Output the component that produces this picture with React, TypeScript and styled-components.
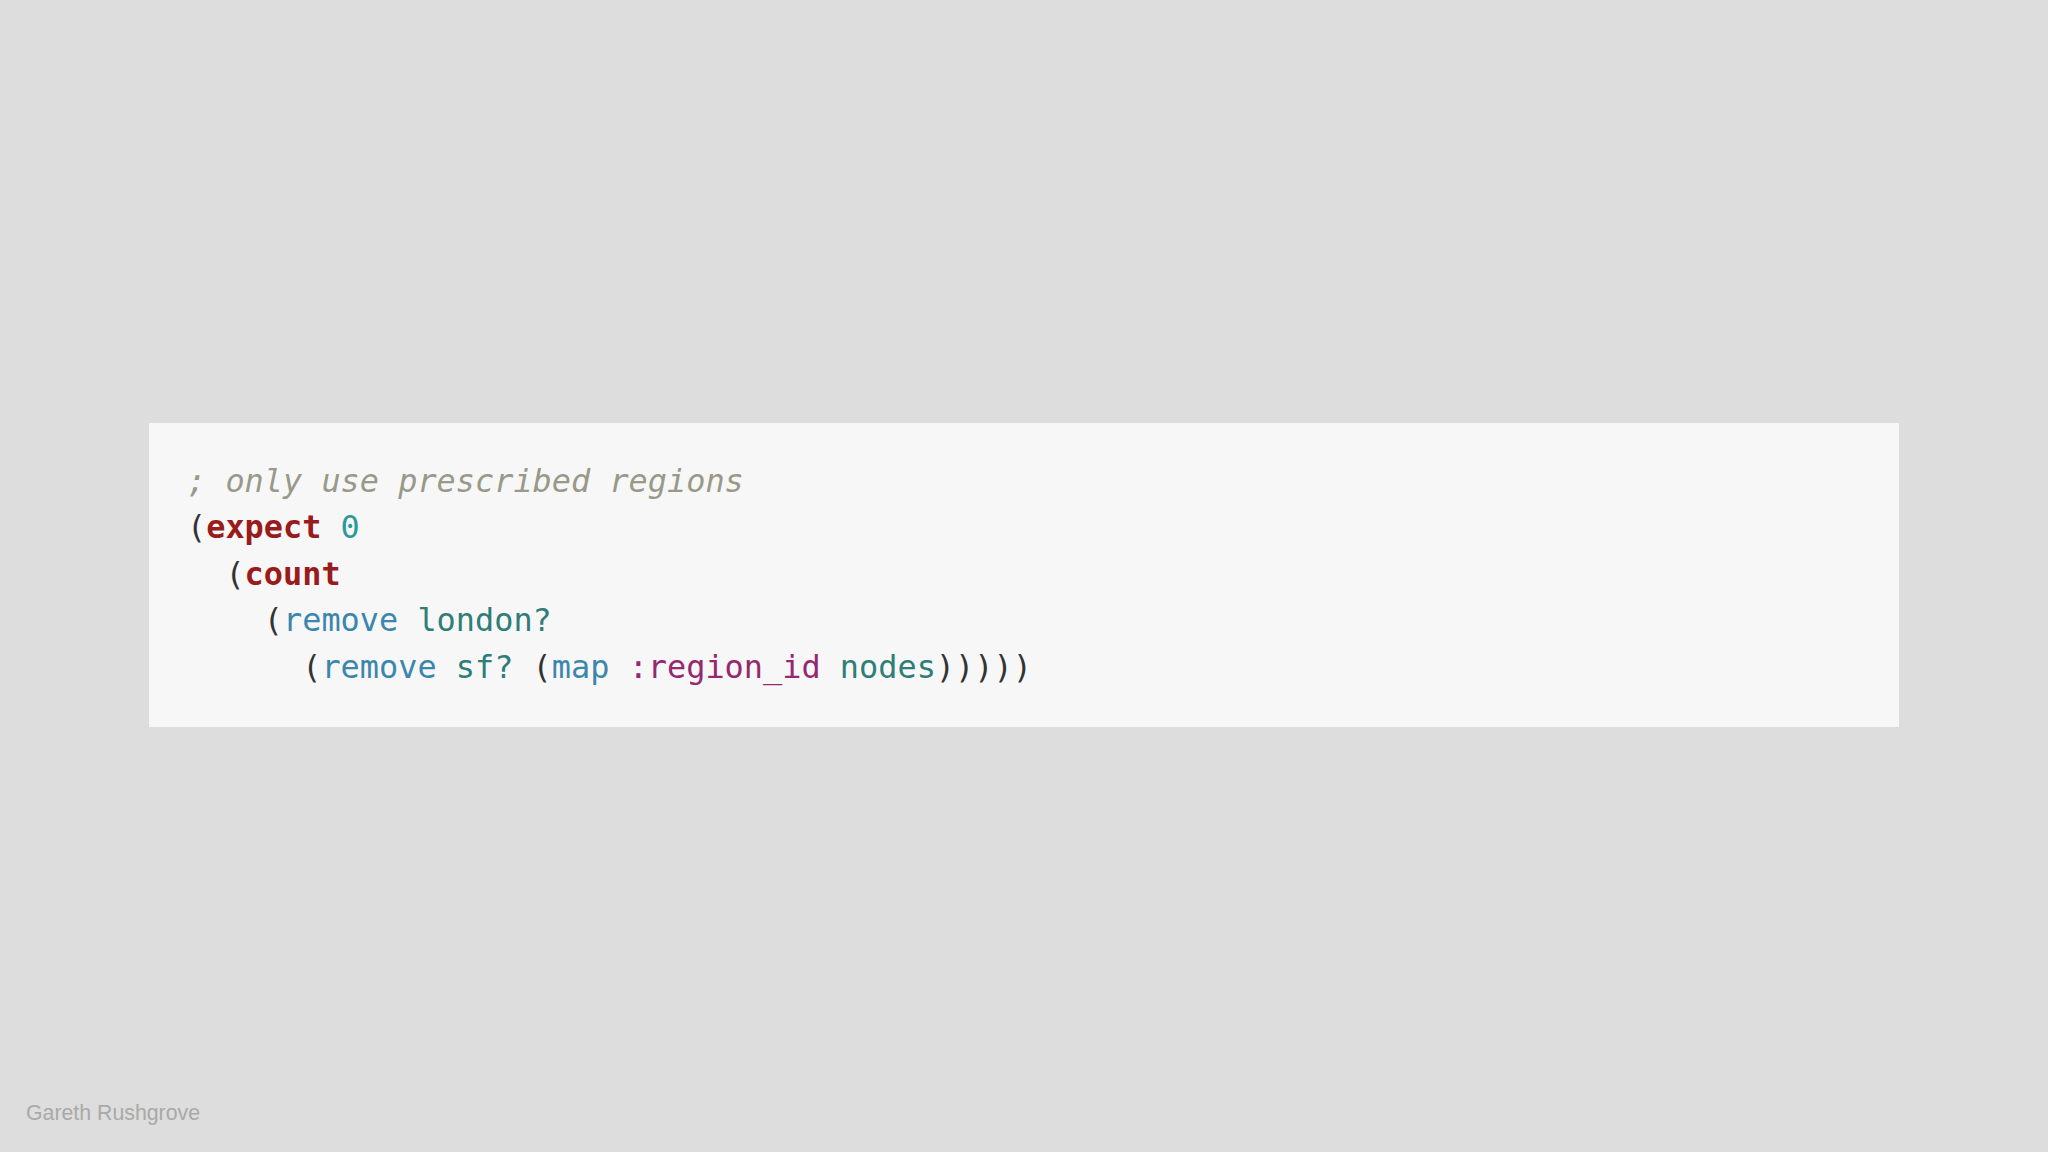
import React from "react";
import styled, { createGlobalStyle } from "styled-components";

const Global = createGlobalStyle`
  html, body { margin: 0; padding: 0; background: #dddddd; }
  #root { height: 100vh; }
`;

const Page = styled.div`
  height: 100vh;
  display: flex;
  flex-direction: column;
  box-sizing: border-box;
`;

const Stage = styled.main`
  flex: 1;
  padding: 423px 149px 0 149px;
`;

const CodeBox = styled.pre`
  margin: 0;
  height: 304px;
  box-sizing: border-box;
  background: #f7f7f7;
  padding: 35px 38px 0 38px;
  font-family: "DejaVu Sans Mono", "Liberation Mono", monospace;
  font-size: 31.9px;
  line-height: 46.4px;
  color: #333333;
`;

const Line = styled.div<{ $indent: number }>`
  padding-left: ${(p) => p.$indent * 2}ch;
  white-space: pre;
`;

const Tok = styled.span<{ $c: string; $b?: boolean; $i?: boolean }>`
  color: ${(p) => p.$c};
  font-weight: ${(p) => (p.$b ? 700 : 400)};
  font-style: ${(p) => (p.$i ? "italic" : "normal")};
`;

const Footer = styled.footer`
  padding: 0 0 27px 26px;
  font-family: "Liberation Sans", Arial, sans-serif;
  font-size: 21.3px;
  line-height: 24px;
  color: #a9a9a9;
`;

const C = {
  comment: "#99998a",
  kw: "#991b1b",
  num: "#2a9a9a",
  fn: "#3b86ad",
  var: "#2e7d78",
  sym: "#95286f",
  paren: "#333333",
};

export default function App() {
  return (
    <Page>
      <Global />
      <Stage>
        <CodeBox>
          <Line $indent={0}>
            <Tok $c={C.comment} $i>; only use prescribed regions</Tok>
          </Line>
          <Line $indent={0}>
            <Tok $c={C.paren}>(</Tok>
            <Tok $c={C.kw} $b>expect</Tok> <Tok $c={C.num}>0</Tok>
          </Line>
          <Line $indent={1}>
            <Tok $c={C.paren}>(</Tok>
            <Tok $c={C.kw} $b>count</Tok>
          </Line>
          <Line $indent={2}>
            <Tok $c={C.paren}>(</Tok>
            <Tok $c={C.fn}>remove</Tok> <Tok $c={C.var}>london?</Tok>
          </Line>
          <Line $indent={3}>
            <Tok $c={C.paren}>(</Tok>
            <Tok $c={C.fn}>remove</Tok> <Tok $c={C.var}>sf?</Tok>{" "}
            <Tok $c={C.paren}>(</Tok>
            <Tok $c={C.fn}>map</Tok> <Tok $c={C.sym}>:region_id</Tok>{" "}
            <Tok $c={C.var}>nodes</Tok>
            <Tok $c={C.paren}>)))))</Tok>
          </Line>
        </CodeBox>
      </Stage>
      <Footer>Gareth Rushgrove</Footer>
    </Page>
  );
}
